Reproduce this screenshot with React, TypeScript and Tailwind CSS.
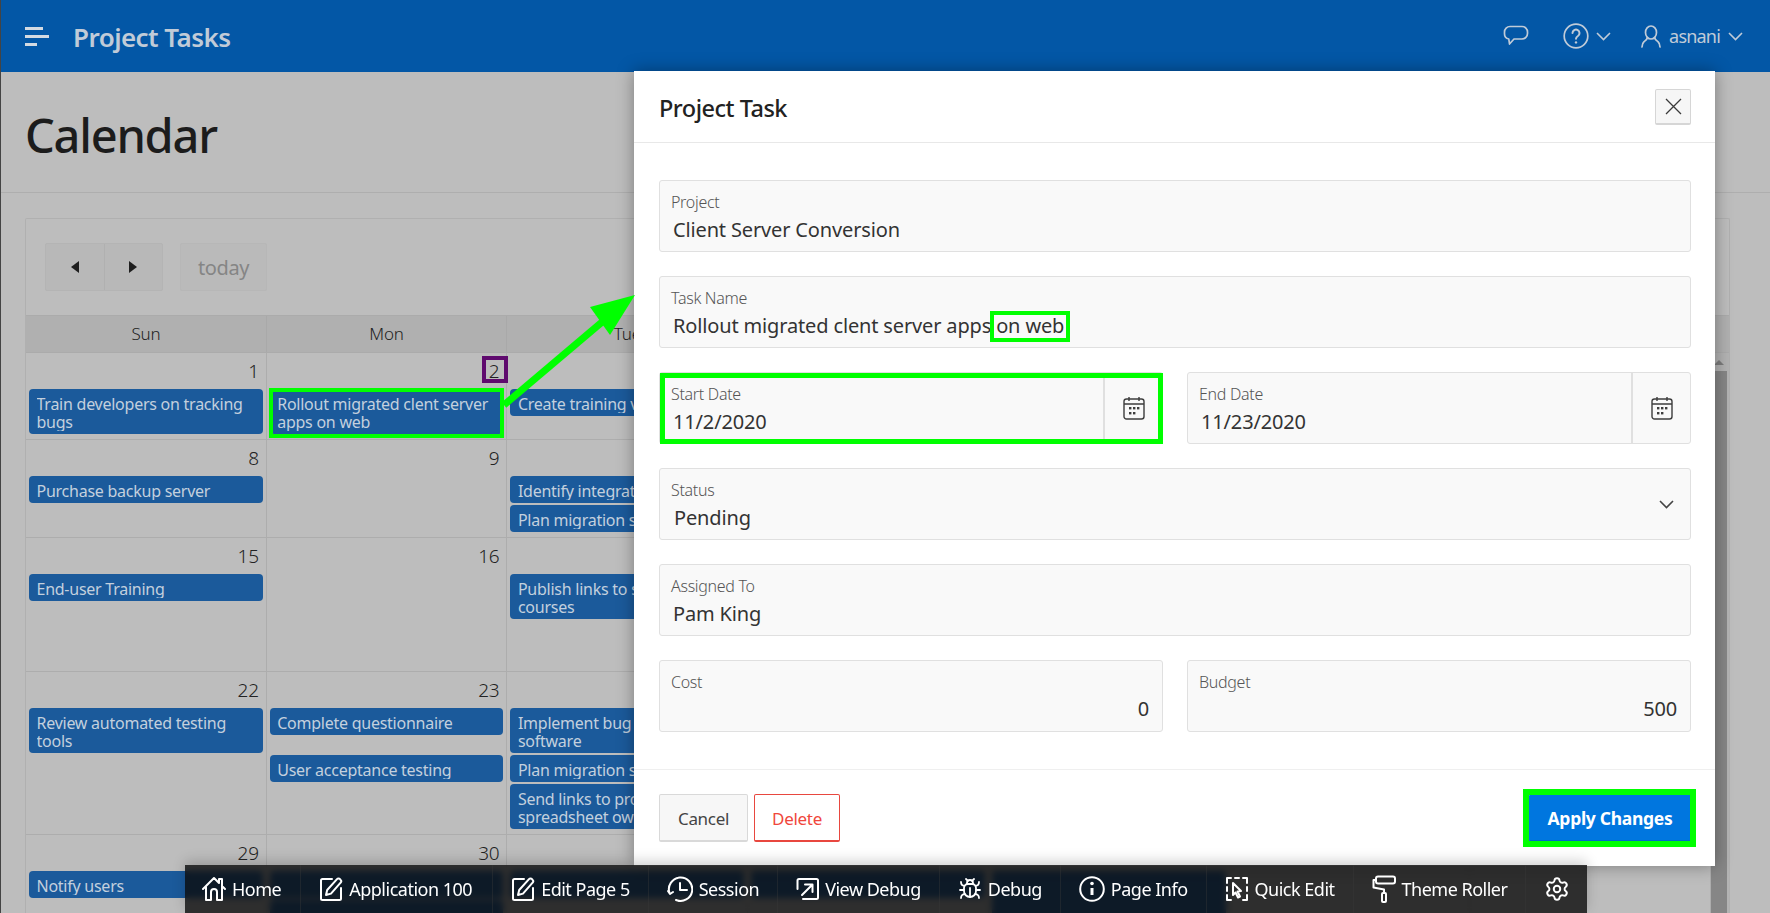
import { Bug, Settings } from "lucide-react"
import { ReactNode } from "react"

type Ev = { text: string; two?: boolean; gap?: boolean }
type Day = { n?: number; events: Ev[] }

const rows: { h: string; days: Day[] }[] = [
    {
        h: "h-[87px]",
        days: [
            { n: 1, events: [{ text: "Train developers on tracking bugs", two: true }] },
            { n: 2, events: [{ text: "Rollout migrated clent server apps on web", two: true }] },
            { n: 3, events: [{ text: "Create training videos" }] },
        ],
    },
    {
        h: "h-[98px]",
        days: [
            { n: 8, events: [{ text: "Purchase backup server" }] },
            { n: 9, events: [] },
            { n: 10, events: [{ text: "Identify integration points" }, { text: "Plan migration schedule" }] },
        ],
    },
    {
        h: "h-[134px]",
        days: [
            { n: 15, events: [{ text: "End-user Training" }] },
            { n: 16, events: [] },
            { n: 17, events: [{ text: "Publish links to self-paced courses", two: true }] },
        ],
    },
    {
        h: "h-[163px]",
        days: [
            { n: 22, events: [{ text: "Review automated testing tools", two: true }] },
            { n: 23, events: [{ text: "Complete questionnaire" }, { text: "User acceptance testing", gap: true }] },
            {
                n: 24,
                events: [
                    { text: "Implement bug tracking software", two: true },
                    { text: "Plan migration schedule" },
                    { text: "Send links to project spreadsheet owners", two: true },
                ],
            },
        ],
    },
    {
        h: "h-[90px]",
        days: [
            { n: 29, events: [{ text: "Notify users" }] },
            { n: 30, events: [{ text: "" }, { text: "" }] },
            { events: [{ text: "" }] },
            { events: [{ text: "" }] },
            { events: [{ text: "", two: true }, { text: "" }] },
        ],
    },
]

function CalendarIcon() {
    return (
        <svg width="22" height="24" viewBox="0 0 22 24" fill="none" stroke="#3d3d3d" strokeWidth="1.4">
            <rect x="1" y="3" width="20" height="20" rx="2.5" />
            <path d="M1 8h20M6 1v4M16 1v4" />
            <g fill="#3d3d3d" stroke="none">
                <rect x="6" y="11" width="2.4" height="2.4" />
                <rect x="10" y="11" width="2.4" height="2.4" />
                <rect x="14" y="11" width="2.4" height="2.4" />
                <rect x="6" y="16" width="2.4" height="2.4" />
                <rect x="10" y="16" width="2.4" height="2.4" />
            </g>
        </svg>
    )
}

function Chevron({ className }: { className?: string }) {
    return (
        <svg className={className} width="15" height="9" viewBox="0 0 15 9" fill="none" stroke="currentColor" strokeWidth="1.6">
            <path d="M1 1l6.5 6.5L14 1" />
        </svg>
    )
}

function Field({ label, value, right, addon, chevron }: { label: string; value: string; right?: boolean; addon?: boolean; chevron?: boolean }) {
    return (
        <div className="flex h-[72px] rounded-[3px] border border-[#e0e0e0] bg-[#f9f9f9]">
            <div className="flex min-w-0 flex-1 flex-col pl-[11px] pr-[13px]">
                <div className="mt-[10px] text-[16px] font-light leading-[22px] tracking-[-0.3px] text-[#555]">{label}</div>
                <div className={`text-[20px] leading-[28px] tracking-[-0.15px] text-[#333] ${right ? "mt-[2px] text-right" : "mt-[3px]"} ${chevron ? "pl-[3px]" : "pl-[2px]"}`}>{value}</div>
            </div>
            {addon && (
                <div className="flex w-[59px] items-center justify-center border-l-2 border-[#e0e0e0]">
                    <CalendarIcon />
                </div>
            )}
            {chevron && (
                <div className="flex w-[44px] items-center justify-center pr-[4px] text-[#444]">
                    <Chevron />
                </div>
            )}
        </div>
    )
}

function DevItem({ icon, label, className }: { icon: ReactNode; label?: string; className?: string }) {
    return (
        <div className={`flex h-full items-center gap-[6px] border-r border-[#3a3a3a]/40 px-[18px] ${className ?? ""}`}>
            {icon}
            {label && <span className="whitespace-nowrap text-[18px] tracking-[-0.5px] text-white">{label}</span>}
        </div>
    )
}

const devIcon = { fill: "none", stroke: "white", strokeWidth: 2, strokeLinecap: "round", strokeLinejoin: "round" } as const

function EditIcon() {
    return (
        <svg width="24" height="26" viewBox="0 0 24 26" {...devIcon}>
            <path d="M13 3H3.5A1.5 1.5 0 0 0 2 4.5v18A1.5 1.5 0 0 0 3.5 24h17a1.5 1.5 0 0 0 1.5-1.5V12" />
            <path d="M7 19l1.2-5L18 3.2a2 2 0 0 1 3 0l.6.7a2 2 0 0 1 0 2.8L12 17.6z" />
        </svg>
    )
}

export default function App() {
    return (
        <div className="relative flex h-screen flex-col overflow-hidden border-l border-[#444] bg-[#bdbdbd] font-['Noto_Sans',sans-serif]">
            <header className="flex h-[72px] shrink-0 items-center bg-[#0357a6] text-[#c0cbd8]">
                <div className="ml-[24px] flex w-[48px] flex-col gap-[5px]">
                    <div className="h-[3px] w-[18px] bg-[#d3dae2]" />
                    <div className="h-[3px] w-[24px] bg-[#d3dae2]" />
                    <div className="h-[3px] w-[12px] bg-[#d3dae2]" />
                </div>
                <div className="pt-[2px] text-[26px] font-semibold tracking-[-0.55px]">Project Tasks</div>
                <div className="ml-auto flex items-center pr-[27px]">
                    <svg width="26" height="22" viewBox="0 0 26 22" fill="none" stroke="currentColor" strokeWidth="1.7" strokeLinejoin="round">
                        <path d="M7 1.5h12a5.5 5.5 0 0 1 5.5 5.5v1.5a5.5 5.5 0 0 1-5.5 5.5h-8l-4.5 5-.7-5A5.5 5.5 0 0 1 1.5 8.5V7A5.5 5.5 0 0 1 7 1.5z" />
                    </svg>
                    <svg className="ml-[34px]" width="26" height="26" viewBox="0 0 26 26" fill="none" stroke="currentColor" strokeWidth="1.7" strokeLinecap="round">
                        <circle cx="13" cy="13" r="11.8" />
                        <path d="M9.5 10a3.5 3.5 0 1 1 5.4 3c-1.3.8-1.9 1.5-1.9 2.8" strokeWidth="2" />
                        <circle cx="13" cy="19.4" r="1.2" fill="currentColor" stroke="none" />
                    </svg>
                    <Chevron className="ml-[7px]" />
                    <svg className="ml-[30px]" width="20" height="23" viewBox="0 0 20 23" fill="none" stroke="currentColor" strokeWidth="1.7" strokeLinecap="round">
                        <ellipse cx="10" cy="7.5" rx="5.5" ry="6.5" />
                        <path d="M6.5 12.5c-.3 2-1.8 3-3.5 4.2C1.8 17.6 1.2 19 1 22M13.5 12.5c.3 2 1.8 3 3.5 4.2 1.2.9 1.8 2.3 2 5.3" />
                    </svg>
                    <span className="ml-[8px] text-[18px] tracking-[-0.8px]">asnani</span>
                    <Chevron className="ml-[8px]" />
                </div>
            </header>

            <div className="flex h-[121px] shrink-0 items-center border-b border-[#aeaeae] pl-[24px] pt-[7px]">
                <h1 className="text-[47px] font-medium leading-none tracking-[-1.25px] text-[#1c1c1c]">Calendar</h1>
            </div>

            <div className="ml-[24px] mr-[40px] mt-[25px] flex-1 rounded-t-[2px] border border-b-0 border-[#b0b0b0]">
                <div className="flex h-[96px] items-center pl-[19px]">
                    <div className="flex h-[48px] w-[118px] rounded-[2px] border border-[#b4b4b4] bg-[#b8b8b8]">
                        <div className="flex flex-1 items-center justify-center border-r border-[#b0b0b0]">
                            <div className="h-0 w-0 border-y-[6px] border-r-[8px] border-y-transparent border-r-[#1e1e1e]" />
                        </div>
                        <div className="flex flex-1 items-center justify-center">
                            <div className="h-0 w-0 border-y-[6px] border-l-[8px] border-y-transparent border-l-[#1e1e1e]" />
                        </div>
                    </div>
                    <div className="ml-[17px] flex h-[48px] w-[87px] items-center justify-center rounded-[2px] border border-[#b7b7b7] bg-[#bababa] pt-[1px] text-[20px] tracking-[-0.4px] text-[#858585]">
                        today
                    </div>
                </div>
                <div className="grid h-[38px] grid-cols-7 border-y border-[#ababab] bg-[#b0b0b0] pr-[18px] text-[17px] font-light leading-[36px] tracking-[-0.2px] text-[#222]">
                    {["Sun", "Mon", "Tue", "Wed", "Thu", "Fri", "Sat"].map((d) => (
                        <div key={d} className="border-r border-[#a9a9a9] text-center">
                            {d}
                        </div>
                    ))}
                </div>
                <div className="flex">
                    <div className="flex-1">
                        {rows.map((r, i) => (
                            <div key={i} className={`grid grid-cols-7 border-b border-[#adadad] ${r.h}`}>
                                {Array.from({ length: 7 }).map((_, c) => {
                                    const day = r.days[c]
                                    return (
                                        <div key={c} className="flex flex-col border-r border-[#adadad] px-[3px]">
                                            <div className="h-[36px] pr-[4px] pt-[4px] text-right text-[19px] font-light leading-[28px] tracking-[-0.3px] text-[#222]">{day?.n}</div>
                                            <div className="flex flex-col gap-[2px]">
                                                {day?.events.map((e, j) => (
                                                    <div key={j} className={`rounded-[4px] bg-[#1b5a9b] px-[7.5px] pt-[6px] text-[16px] tracking-[-0.25px] text-[#c3d0de] ${e.two ? "h-[45px]" : "h-[27px]"} ${e.gap ? "mt-[18px]" : ""}`}>
                                                        <div className={`overflow-hidden leading-[18px] ${e.two ? "h-[36px]" : "h-[18px]"}`}>{e.text}</div>
                                                    </div>
                                                ))}
                                            </div>
                                        </div>
                                    )
                                })}
                            </div>
                        ))}
                    </div>
                    <div className="flex w-[18px] flex-col bg-[#b3b3b3]">
                        <div className="flex h-[18px] items-center justify-center pr-[2px]">
                            <div className="h-0 w-0 border-x-[5px] border-b-[5px] border-x-transparent border-b-[#7d7d7d]" />
                        </div>
                        <div className="mr-[2px] flex-1 bg-[#868686]" />
                    </div>
                </div>
            </div>

            {/* annotations on the calendar */}
            <div className="absolute left-[481px] top-[356px] h-[27px] w-[26px] border-[4px] border-[#5f0a6e]" />
            <div className="absolute left-[268px] top-[388px] h-[50px] w-[235px] border-[4px] border-[#00ff00]" />

            {/* task dialog */}
            <div className="absolute left-[633px] top-[71px] flex h-[795px] w-[1081px] flex-col bg-white shadow-[0_0_16px_rgba(0,0,0,0.35)]">
                <div className="flex h-[72px] shrink-0 items-center justify-between border-b border-[#e8e8e8] pl-[25px] pr-[24px]">
                    <h2 className="pt-[5px] text-[23.5px] font-medium tracking-[-0.5px] text-[#222]">Project Task</h2>
                    <button className="flex h-[36px] w-[36px] items-center justify-center rounded-[2px] border border-[#d6d6d6] bg-[#f6f6f6] border-b-2">
                        <svg width="17" height="17" viewBox="0 0 17 17" stroke="#3a3a3a" strokeWidth="1.3">
                            <path d="M1 1l15 15M16 1L1 16" />
                        </svg>
                    </button>
                </div>
                <div className="flex flex-1 flex-col gap-[24px] pl-[25px] pr-[24px] pt-[37px]">
                    <Field label="Project" value="Client Server Conversion" />
                    <Field label="Task Name" value="Rollout migrated clent server apps on web" />
                    <div className="grid grid-cols-2 gap-x-[24px]">
                        <Field label="Start Date" value="11/2/2020" addon />
                        <Field label="End Date" value="11/23/2020" addon />
                    </div>
                    <Field label="Status" value="Pending" chevron />
                    <Field label="Assigned To" value="Pam King" />
                    <div className="grid grid-cols-2 gap-x-[24px]">
                        <Field label="Cost" value="0" right />
                        <Field label="Budget" value="500" right />
                    </div>
                </div>
                <div className="flex h-[97px] shrink-0 items-start border-t border-[#efefef] pl-[25px] pr-[24px] pt-[24px]">
                    <button className="h-[48px] w-[89px] rounded-[2px] border border-b-2 border-[#d9d9d9] bg-[#f7f7f7] pt-[2px] text-[17px] tracking-[-0.3px] text-[#444]">Cancel</button>
                    <button className="ml-[6px] h-[48px] w-[86px] rounded-[2px] border border-b-2 border-[#e8473f] bg-white pt-[2px] text-[17px] tracking-[-0.3px] text-[#f0463c]">Delete</button>
                    <button className="ml-auto h-[48px] w-[162px] rounded-[2px] border-b-2 border-[#0069c8] bg-[#0076df] pt-[2px] text-[17.5px] font-bold tracking-[-0.3px] text-white">Apply Changes</button>
                </div>
            </div>

            {/* annotations on the dialog */}
            <div className="absolute left-[989px] top-[311px] h-[31px] w-[80px] border-[4px] border-[#00ff00]" />
            <div className="absolute left-[659px] top-[373px] h-[71px] w-[503px] border-[5px] border-[#00ff00]" />
            <div className="absolute left-[1522px] top-[789px] h-[58px] w-[173px] border-[6px] border-[#00ff00]" />
            <svg className="pointer-events-none absolute left-[499px] top-[290px]" width="140" height="120" viewBox="0 0 140 120">
                <path d="M4 115L108 27" stroke="#00ff00" strokeWidth="7" />
                <polygon points="135,5 90,17 110,45" fill="#00ff00" />
            </svg>

            {/* developer toolbar */}
            <div className="absolute bottom-0 left-[184px] flex h-[48px] w-[1402px] items-center bg-[#0a0a0a]/80 shadow-[0_-4px_12px_rgba(0,0,0,0.18)] backdrop-blur-[3px]">
                <DevItem
                    className="pl-[17px] pr-[19px]"
                    label="Home"
                    icon={
                        <svg width="24" height="26" viewBox="0 0 24 26" {...devIcon}>
                            <path d="M1 13L12 2l5 5V3h3v7l3 3M4 11v13h5v-8a2.500 2.500 0 0 1 6 0v8h5V8" />
                        </svg>
                    }
                />
                <DevItem className="pr-[20px]" label="Application 100" icon={<EditIcon />} />
                <DevItem label="Edit Page 5" icon={<EditIcon />} />
                <DevItem
                    label="Session"
                    icon={
                        <svg width="26" height="26" viewBox="0 0 26 26" {...devIcon}>
                            <path d="M9 24A11.700 11.700 0 1 0 2.500 17M13 7v7h7M1 15l2 3 3-2" />
                        </svg>
                    }
                />
                <DevItem
                    label="View Debug"
                    icon={
                        <svg width="23" height="24" viewBox="0 0 23 24" {...devIcon}>
                            <path d="M1.500 12V3.500A1.500 1.500 0 0 1 3 2h17.500A1.500 1.500 0 0 1 22 3.500v17a1.500 1.500 0 0 1-1.500 1.500H7" />
                            <path d="M6 18L16 8M9 7.500h7.500V15" />
                        </svg>
                    }
                />
                <DevItem label="Debug" icon={<Bug size={24} color="white" strokeWidth={1.8} />} />
                <DevItem
                    label="Page Info"
                    icon={
                        <svg width="26" height="26" viewBox="0 0 26 26" {...devIcon}>
                            <circle cx="13" cy="13" r="11.800" />
                            <path d="M13 12v7" strokeWidth="3" strokeLinecap="butt" />
                            <circle cx="13" cy="7.500" r="1.800" fill="white" stroke="none" />
                        </svg>
                    }
                />
                <DevItem
                    label="Quick Edit"
                    icon={
                        <svg width="24" height="26" viewBox="0 0 24 26" {...devIcon}>
                            <path d="M6 2H2v5M2 11v4M2 19v5h4M10 2h4M18 2h4v5M22 11v4M22 19v5h-4" />
                            <path d="M8 7l8 8-3.500.500 2.500 5-2 1-2.500-5L8 19z" fill="none" />
                        </svg>
                    }
                />
                <DevItem
                    label="Theme Roller"
                    icon={
                        <svg width="24" height="28" viewBox="0 0 24 28" {...devIcon}>
                            <rect x="4" y="1.500" width="19" height="7" rx="2" />
                            <path d="M4 5H1.500v7.500L12 14.500V18" />
                            <rect x="10" y="18" width="4" height="9" rx="1" />
                        </svg>
                    }
                />
                <DevItem className="border-r-0" icon={<Settings size={26} color="white" strokeWidth={1.8} />} />
            </div>
        </div>
    )
}
